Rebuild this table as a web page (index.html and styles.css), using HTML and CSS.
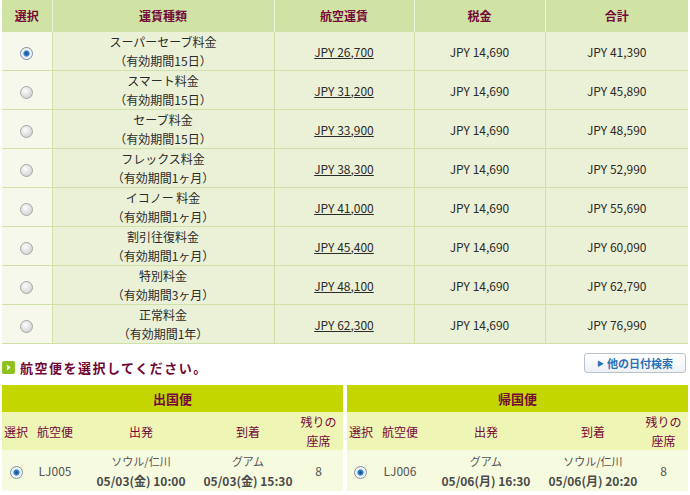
FILE: index.html
```html
<!DOCTYPE html>
<html lang="ja">
<head>
<meta charset="utf-8">
<link rel="stylesheet" href="styles.css">
</head>
<body>
<table class="fares">
  <colgroup>
    <col class="c-sel"><col class="c-type"><col class="c-fare"><col class="c-tax"><col class="c-total">
  </colgroup>
  <thead>
    <tr><th>選択</th><th>運賃種類</th><th>航空運賃</th><th>税金</th><th>合計</th></tr>
  </thead>
  <tbody>
    <tr><td class="sel"><span class="radio on"></span></td><td>スーパーセーブ料金<br>（有効期間15日）</td><td><u>JPY 26,700</u></td><td>JPY 14,690</td><td>JPY 41,390</td></tr>
    <tr><td class="sel"><span class="radio"></span></td><td>スマート料金<br>（有効期間15日）</td><td><u>JPY 31,200</u></td><td>JPY 14,690</td><td>JPY 45,890</td></tr>
    <tr><td class="sel"><span class="radio"></span></td><td>セーブ料金<br>（有効期間15日）</td><td><u>JPY 33,900</u></td><td>JPY 14,690</td><td>JPY 48,590</td></tr>
    <tr><td class="sel"><span class="radio"></span></td><td>フレックス料金<br>（有効期間1ヶ月）</td><td><u>JPY 38,300</u></td><td>JPY 14,690</td><td>JPY 52,990</td></tr>
    <tr><td class="sel"><span class="radio"></span></td><td>イコノー 料金<br>（有効期間1ヶ月）</td><td><u>JPY 41,000</u></td><td>JPY 14,690</td><td>JPY 55,690</td></tr>
    <tr><td class="sel"><span class="radio"></span></td><td>割引往復料金<br>（有効期間1ヶ月）</td><td><u>JPY 45,400</u></td><td>JPY 14,690</td><td>JPY 60,090</td></tr>
    <tr><td class="sel"><span class="radio"></span></td><td>特別料金<br>（有効期間3ヶ月）</td><td><u>JPY 48,100</u></td><td>JPY 14,690</td><td>JPY 62,790</td></tr>
    <tr><td class="sel"><span class="radio"></span></td><td>正常料金<br>（有効期間1年）</td><td><u>JPY 62,300</u></td><td>JPY 14,690</td><td>JPY 76,990</td></tr>
  </tbody>
</table>

<div class="section-head">
  <h2 class="title"><span class="bullet"><svg width="13" height="13" viewBox="0 0 13 13"><rect width="13" height="13" rx="2" fill="#8dc21f"/><path d="M5 3.5 L8.5 6.5 L5 9.5 Z" fill="#fff"/></svg></span>航空便を選択してください。</h2>
  <button class="other-date"><span class="tri">▶</span>他の日付検索</button>
</div>

<div class="flights">
  <table class="flight">
    <colgroup><col class="f-sel"><col class="f-no"><col class="f-dep"><col class="f-arr"><col class="f-seat"></colgroup>
    <tr class="cap"><th colspan="5">出国便</th></tr>
    <tr class="sub"><td>選択</td><td>航空便</td><td>出発</td><td>到着</td><td>残りの<br>座席</td></tr>
    <tr class="data"><td><span class="radio on"></span></td><td>LJ005</td><td><span class="city">ソウル/仁川</span><b>05/03(金) 10:00</b></td><td><span class="city">グアム</span><b>05/03(金) 15:30</b></td><td>8</td></tr>
  </table>
  <table class="flight">
    <colgroup><col class="f-sel"><col class="f-no"><col class="f-dep"><col class="f-arr"><col class="f-seat"></colgroup>
    <tr class="cap"><th colspan="5">帰国便</th></tr>
    <tr class="sub"><td>選択</td><td>航空便</td><td>出発</td><td>到着</td><td>残りの<br>座席</td></tr>
    <tr class="data"><td><span class="radio on"></span></td><td>LJ006</td><td><span class="city">グアム</span><b>05/06(月) 16:30</b></td><td><span class="city">ソウル/仁川</span><b>05/06(月) 20:20</b></td><td>8</td></tr>
  </table>
</div>
</body>
</html>
```

FILE: styles.css
```css
html, body {
  margin: 0;
  padding: 0;
  background: #fff;
}
body {
  padding: 0 2px;
  font-family: "Noto Sans CJK JP", "DejaVu Sans", sans-serif;
  font-size: 12px;
  color: #333;
  width: 686px;
}
table {
  border-collapse: collapse;
}
.fares {
  width: 686px;
  table-layout: fixed;
}
.c-sel { width: 50px; }
.c-type { width: 222px; }
.c-fare { width: 140px; }
.c-tax { width: 131px; }
.c-total { width: 143px; }

.fares th {
  height: 31px;
  padding: 0;
  background: #d0e3a4;
  color: #74093a;
  font-weight: bold;
  font-size: 12px;
  border-right: 1px solid #eef3dc;
}
.fares th:last-child { border-right: 0; }
.fares td {
  height: 38px;
  padding: 0;
  text-align: center;
  line-height: 19px;
  background: #ebf1d6;
  border-top: 1px solid #cfe0a8;
  border-left: 1px solid #cfe0a8;
  color: #2b2b2b;
}
.fares td.sel {
  background: #f5f8ea;
  border-left: 0;
}
.fares tbody tr:last-child td { border-bottom: 1px solid #cfe0a8; }
.fares u { text-decoration: underline; }

.radio {
  display: inline-block;
  width: 11px;
  height: 11px;
  border-radius: 50%;
  background: radial-gradient(circle at 40% 35%, #fdfdfd, #d7d7d7 70%);
  border: 1px solid #a8a8a8;
  vertical-align: middle;
}
.radio.on {
  background: radial-gradient(circle at 50% 50%, #1b4f8c 0, #2d7ec9 2.5px, #dfe8f0 3.5px, #f3f5f7 5px);
  border-color: #7c8ea2;
}

.section-head {
  display: flex;
  align-items: center;
  justify-content: space-between;
  height: 38px;
}
.title {
  margin: 0;
  display: flex;
  align-items: center;
  gap: 5px;
  font-size: 13px;
  font-weight: bold;
  color: #6e0838;
  letter-spacing: 1.5px;
  padding-top: 8px;
}
.bullet { display: flex; }
.other-date {
  margin: 0 2px 0 0;
  width: 102px;
  height: 20px;
  padding: 0;
  border: 1px solid #b9c2cc;
  border-radius: 3px;
  background: linear-gradient(#ffffff, #eef1f4);
  font-family: inherit;
  font-size: 11px;
  font-weight: bold;
  color: #2a6fb5;
  display: flex;
  align-items: center;
  justify-content: center;
  gap: 3px;
}
.tri { font-size: 7px; color: #2a6fb5; }

.flights {
  display: flex;
  justify-content: space-between;
  margin-top: 3px;
}
.flight {
  width: 341px;
  table-layout: fixed;
}
.flight:first-child { width: 340px; }
.f-sel { width: 28px; }
.f-no { width: 50px; }
.f-dep { width: 122px; }
.f-arr { width: 92px; }
.f-seat { width: 49px; }

.flight .cap th {
  height: 27px;
  padding: 0;
  background: #c3d600;
  color: #74093a;
  font-size: 13px;
  font-weight: bold;
}
.flight .sub td {
  height: 38px;
  padding: 0;
  background: #eef5b5;
  color: #74093a;
  text-align: center;
  line-height: 19px;
  font-size: 12px;
}
.flight .data td {
  height: 41px;
  padding: 0;
  background: #f6fadf;
  text-align: center;
  line-height: 19px;
  color: #555;
  font-size: 12px;
}
.city {
  display: block;
  font-size: 11px;
  color: #555;
}
.flight b {
  display: block;
  color: #4a4a4a;
  font-size: 12px;
  white-space: nowrap;
}
```
